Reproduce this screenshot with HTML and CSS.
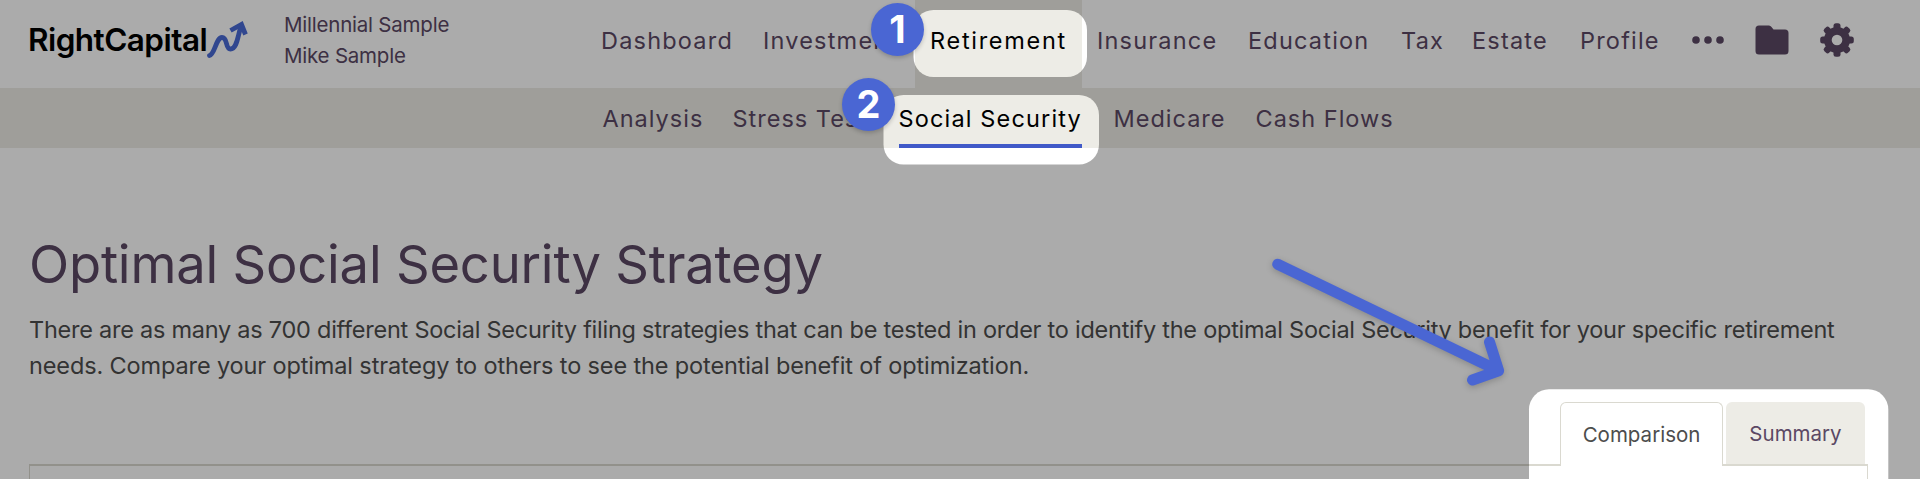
FILE: index.html
```
<!DOCTYPE html>
<html lang="en">
<head>
    <meta charset="UTF-8">
    <meta name="viewport" content="width=device-width, initial-scale=1.0">
    <title>RightCapital - Social Security</title>
    <link rel="stylesheet" href="styles.css">
</head>
<body>

<header class="topbar">
    <div class="logo">
        <span class="logo-text">RightCapital</span>
        <svg class="logo-mark" width="42" height="38" viewBox="0 0 42 38">
            <path d="M3.500 35.500C9 34 10 17.500 16 17.500C22 17.500 19 29 24.500 29C31 29 31.500 17 35 6" />
            <path d="M24.500 10.500L35.500 4.500L39.500 14.500" />
        </svg>
    </div>
    <div class="household">
        <div>Millennial Sample</div>
        <div>Mike Sample</div>
    </div>
    <nav class="main-nav">
        <a>Dashboard</a>
        <a>Investments</a>
        <a class="active">Retirement</a>
        <a>Insurance</a>
        <a>Education</a>
        <a>Tax</a>
        <a>Estate</a>
        <a>Profile</a>
    </nav>
    <div class="tools">
        <svg width="32" height="8" viewBox="0 0 32 8">
            <circle cx="4" cy="4" r="3.800" /><circle cx="16" cy="4" r="3.800" /><circle cx="28" cy="4" r="3.800" />
        </svg>
        <svg width="34" height="30" viewBox="0 0 34 30">
            <path d="M4 0.500H14Q15.500 0.500 16.500 2L18.500 4.500H30Q33.500 4.500 33.500 8V26Q33.500 29.500 30 29.500H4Q0.500 29.500 0.500 26V4Q0.500 0.500 4 0.500Z" />
        </svg>
        <svg width="34" height="34" viewBox="0 0 34 34">
            <g id="teeth">
                <rect x="13.500" y="0.200" width="7" height="33.600" rx="2.500" />
                <rect x="0.200" y="13.500" width="33.600" height="7" rx="2.500" />
                <rect x="13.500" y="0.200" width="7" height="33.600" rx="2.500" transform="rotate(45 17 17)" />
                <rect x="0.200" y="13.500" width="33.600" height="7" rx="2.500" transform="rotate(45 17 17)" />
            </g>
            <circle cx="17" cy="17" r="13" />
            <circle class="hub" cx="17" cy="17" r="5.300" />
        </svg>
    </div>
</header>

<nav class="sub-nav">
    <a>Analysis</a>
    <a>Stress Tests</a>
    <a class="active">Social Security</a>
    <a>Medicare</a>
    <a>Cash Flows</a>
</nav>

<main class="content">
    <h1>Optimal Social Security Strategy</h1>
    <p class="line-one">There are as many as 700 different Social Security filing strategies that can be tested in order to identify the optimal Social Security benefit for your specific retirement</p>
    <p class="line-two">needs. Compare your optimal strategy to others to see the potential benefit of optimization.</p>

    <div class="tabs">
        <div class="tab selected">Comparison</div>
        <div class="tab">Summary</div>
    </div>
    <div class="panel"></div>
</main>

<!-- walkthrough layer: dimmed page with cut-outs, arrow and step badges -->
<div class="guide">
    <svg width="1920" height="479" viewBox="0 0 1920 479">
        <mask id="spots">
            <rect width="1920" height="479" fill="#fff" />
            <rect x="913.500" y="10" width="173.500" height="67" rx="20" />
            <rect x="883.500" y="95" width="215.500" height="69.500" rx="20" />
            <rect x="1529" y="389.300" width="359.300" height="120" rx="20" />
        </mask>
        <rect class="dim" width="1920" height="479" mask="url(#spots)" />
        <path class="arrow" d="M1277.700 264.300L1498.600 370.700M1489.500 342L1498.600 370.700L1472.500 380" />
    </svg>
    <span class="step step-one">1</span>
    <span class="step step-two">2</span>
</div>

</body>
</html>
```
FILE: styles.css
```
body {
    margin: 0;
    height: 479px;
    overflow: hidden;
    position: relative;
    background: #ffffff;
    font-family: Inter, "Liberation Sans", sans-serif;
    color: #5b4864;
}
.topbar {
    display: flex;
    height: 87.5px;
}
.logo {
    display: flex;
    width: 256px;
    padding-left: 28px;
    box-sizing: border-box;
    color: #000;
}
.logo-text {
    width: 178px;
    margin-top: 20px;
    font-size: 31.5px;
    font-weight: 600;
    line-height: 40px;
    letter-spacing: -0.55px;
    white-space: nowrap;
}
.logo-mark {
    margin-top: 20px;
    fill: none;
    stroke: #4a6bd6;
    stroke-width: 4.8;
}
.logo-mark path:first-child {
    stroke-linecap: round;
}
.household {
    width: 330px;
    padding-left: 28px;
    margin-top: 9px;
    box-sizing: border-box;
    font-size: 20.5px;
    line-height: 31px;
    letter-spacing: -0.22px;
}
.main-nav {
    display: grid;
    grid-template-columns: 162px 167px 167px 151px 153px 71px 108px 111px;
}
.main-nav a,
.sub-nav a {
    font-size: 23.5px;
    letter-spacing: 1px;
    white-space: nowrap;
}
.main-nav a {
    padding-left: 15px;
    line-height: 81px;
    letter-spacing: 1.2px;
}
.main-nav .active,
.sub-nav .active {
    color: #000;
}
.main-nav .active {
    background: #edece6;
    letter-spacing: 1.7px;
}
.tools {
    display: flex;
    align-items: center;
    gap: 31px;
    height: 80px;
    margin-left: 15.5px;
    fill: #5b4864;
}
.hub {
    fill: #fff;
}
.sub-nav {
    display: grid;
    grid-template-columns: 130px 166px 215px 142px 150px;
    height: 60.5px;
    padding-left: 602.5px;
    background: #edece6;
}
.sub-nav a {
    line-height: 62px;
}
.sub-nav .active {
    width: 183px;
    height: 56.5px;
    border-bottom: 4px solid #4059c8;
    letter-spacing: 1.15px;
}
.content {
    padding: 0 52px 0 29px;
}
h1 {
    margin: 84px 0 0;
    font-size: 52.5px;
    font-weight: 400;
    line-height: 64px;
    letter-spacing: -0.2px;
}
p {
    margin: 0;
    font-size: 23.5px;
    line-height: 36px;
    white-space: nowrap;
    color: #4d4d4d;
}
.line-one {
    margin-top: 16px;
    letter-spacing: -0.25px;
}
.line-two {
    letter-spacing: -0.13px;
}
.tabs {
    display: flex;
    justify-content: flex-end;
    gap: 3px;
    margin-top: 18px;
    padding-right: 3px;
}
.tab {
    position: relative;
    width: 139px;
    height: 62px;
    border-radius: 6px 6px 0 0;
    background: #edece6;
    font-size: 20.5px;
    line-height: 64px;
    text-align: center;
}
.tab.selected {
    width: 161px;
    height: 63px;
    margin-bottom: -2px;
    border: 1px solid #dad9d0;
    border-bottom: 0;
    background: #fff;
    color: #4d4d4d;
}
.panel {
    height: 13px;
    border: 1px solid #dad9d0;
    border-top-width: 2px;
    border-bottom: 0;
}
.guide {
    position: absolute;
    top: 0;
    left: 0;
}
.guide svg {
    display: block;
}
.dim {
    fill: rgba(0, 0, 0, 0.33);
}
.arrow {
    fill: none;
    stroke: #4a66d3;
    stroke-width: 11;
    stroke-linecap: round;
    stroke-linejoin: round;
    filter: drop-shadow(0 2px 3px rgba(0, 0, 0, 0.2));
}
.step {
    position: absolute;
    width: 53px;
    height: 53px;
    border-radius: 50%;
    background: #4a66d3;
    box-shadow: 0 2px 4px rgba(0, 0, 0, 0.2);
    color: #fff;
    font-size: 38px;
    font-weight: 700;
    line-height: 53px;
    text-align: center;
}
.step-one {
    top: 3px;
    left: 871px;
}
.step-two {
    top: 78px;
    left: 842px;
}
```
